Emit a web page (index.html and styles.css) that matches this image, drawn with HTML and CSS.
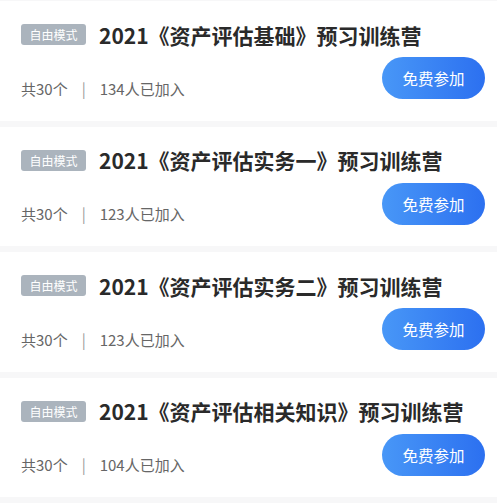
FILE: index.html
```html
<!DOCTYPE html>
<html lang="zh-CN">
<head>
    <meta charset="UTF-8">
    <meta name="viewport" content="width=device-width, initial-scale=1.0">
    <title>预习训练营</title>
    <link rel="stylesheet" href="styles.css">
</head>
<body>
<div class="list">
    <div class="camp">
        <div class="camp-head">
            <span class="tag">自由模式</span>
            <h2 class="title">2021《资产评估基础》预习训练营</h2>
        </div>
        <div class="camp-foot">
            <div class="meta">
                <span>共30个</span>
                <span class="sep">|</span>
                <span>134人已加入</span>
            </div>
            <button class="join">免费参加</button>
        </div>
    </div>
    <div class="camp">
        <div class="camp-head">
            <span class="tag">自由模式</span>
            <h2 class="title">2021《资产评估实务一》预习训练营</h2>
        </div>
        <div class="camp-foot">
            <div class="meta">
                <span>共30个</span>
                <span class="sep">|</span>
                <span>123人已加入</span>
            </div>
            <button class="join">免费参加</button>
        </div>
    </div>
    <div class="camp">
        <div class="camp-head">
            <span class="tag">自由模式</span>
            <h2 class="title">2021《资产评估实务二》预习训练营</h2>
        </div>
        <div class="camp-foot">
            <div class="meta">
                <span>共30个</span>
                <span class="sep">|</span>
                <span>123人已加入</span>
            </div>
            <button class="join">免费参加</button>
        </div>
    </div>
    <div class="camp">
        <div class="camp-head">
            <span class="tag">自由模式</span>
            <h2 class="title">2021《资产评估相关知识》预习训练营</h2>
        </div>
        <div class="camp-foot">
            <div class="meta">
                <span>共30个</span>
                <span class="sep">|</span>
                <span>104人已加入</span>
            </div>
            <button class="join">免费参加</button>
        </div>
    </div>
</div>
</body>
</html>
```

FILE: styles.css
```css
body {
    margin: 0;
    background-color: #f7f7f8;
    font-family: "Noto Sans CJK SC", "Noto Sans", sans-serif;
}

.list {
    display: flex;
    flex-direction: column;
    gap: 6px;
    padding-top: 1px;
}

.camp {
    height: 119.5px;
    box-sizing: border-box;
    padding: 23px 12px 0 21px;
    background-color: #fff;
}

.camp-head {
    display: flex;
    align-items: center;
    height: 21px;
}

.tag {
    padding: 0 8.5px;
    height: 21px;
    line-height: 21px;
    border-radius: 3px;
    background-color: #abb4bd;
    color: #fff;
    font-size: 12px;
}

.title {
    margin: 0 0 0 13px;
    font-size: 21px;
    font-weight: bold;
    color: #2a2a2a;
    white-space: nowrap;
}

.camp-foot {
    display: flex;
    justify-content: space-between;
    align-items: flex-end;
    margin-top: 12px;
}

.meta {
    display: flex;
    align-items: center;
    height: 22px;
    font-size: 15px;
    color: #666;
}

.sep {
    margin: 0 14px;
    color: #999;
}

.join {
    height: 42px;
    padding: 0 20.5px;
    border: none;
    border-radius: 21px;
    background: linear-gradient(90deg, #4897f7, #2c70f0);
    color: #fff;
    font-family: inherit;
    font-size: 15.5px;
    cursor: pointer;
}
```
